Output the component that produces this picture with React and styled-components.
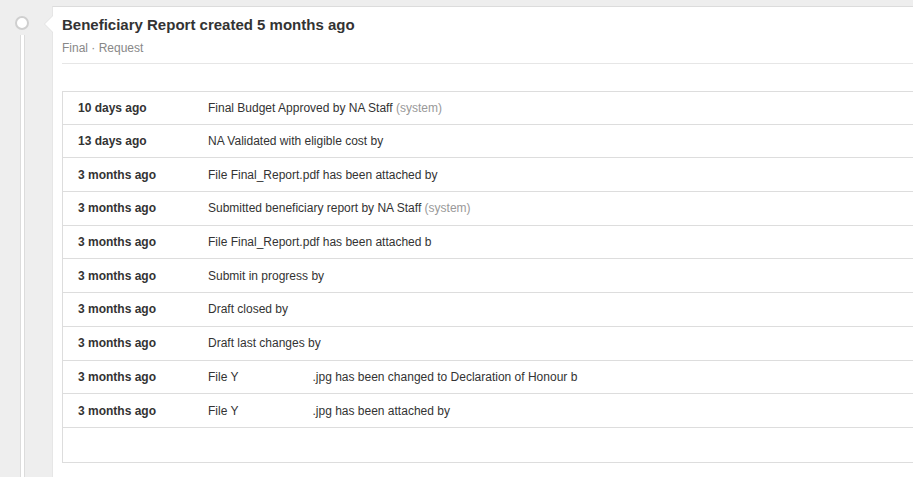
import React from "react";
import styled, { createGlobalStyle } from "styled-components";

const Global = createGlobalStyle`
  html, body {
    margin: 0;
    padding: 0;
    background: #eeeeee;
    overflow: hidden;
  }
  body {
    font-family: "Liberation Sans", Arial, sans-serif;
    color: #333;
  }
`;

const Page = styled.div`
  display: flex;
  align-items: stretch;
  padding-top: 6px;
  height: 471px;
  width: 100%;
`;

const Rail = styled.div`
  flex: 0 0 44px;
  display: flex;
  flex-direction: column;
  align-items: center;
  padding-top: 10px;
`;

const Dot = styled.div`
  width: 10px;
  height: 10px;
  border-radius: 50%;
  background: #fff;
  border: 2px solid #cfcfcf;
`;

const Line = styled.div`
  flex: 1;
  width: 3px;
  margin-top: 5px;
  background: #fff;
  border-left: 1px solid #dcdcdc;
  border-right: 1px solid #dcdcdc;
`;

const Card = styled.div`
  position: relative;
  margin-left: 8px;
  flex: 1;
  min-width: 0;
  background: #fff;
  border-top: 1px solid #dcdcdc;
  border-left: 1px solid #e6e6e6;
  padding: 8px 0 0 9px;
  box-sizing: border-box;

  &::before {
    content: "";
    position: absolute;
    left: -9px;
    top: 8px;
    border-top: 9px solid transparent;
    border-bottom: 9px solid transparent;
    border-right: 9px solid #e2e2e2;
  }
  &::after {
    content: "";
    position: absolute;
    left: -8px;
    top: 9px;
    border-top: 8px solid transparent;
    border-bottom: 8px solid transparent;
    border-right: 8px solid #fff;
  }
`;

const Header = styled.div`
  border-bottom: 1px solid #e6e6e6;
  padding-bottom: 8px;
`;

const Title = styled.h2`
  margin: 0;
  font-size: 15px;
  line-height: 20px;
  font-weight: bold;
  color: #333;
`;

const Meta = styled.div`
  margin-top: 6px;
  font-size: 12px;
  line-height: 14px;
  color: #888;
`;

const Table = styled.div`
  margin-top: 27px;
  border: 1px solid #dddddd;
  border-right: none;
`;

const Row = styled.div`
  display: grid;
  grid-template-columns: 145px 1fr;
  align-items: center;
  height: 33.7px;
  box-sizing: border-box;
  border-bottom: 1px solid #dddddd;
  font-size: 12px;
  &:first-child {
    height: 32.7px;
  }
  &:last-child {
    border-bottom: none;
  }
`;

const When = styled.div`
  padding-left: 15px;
  font-weight: bold;
  color: #333;
`;

const What = styled.div`
  color: #333;
  white-space: nowrap;
  overflow: hidden;
`;

const Muted = styled.span`
  color: #999;
`;

const Hidden = styled.span`
  display: inline-block;
  width: ${(p) => p.$w}px;
`;

const rows = [
  ["10 days ago", <>Final Budget Approved by NA Staff <Muted>(system)</Muted></>],
  ["13 days ago", <>NA Validated with eligible cost by</>],
  ["3 months ago", <>File Final_Report.pdf has been attached by</>],
  ["3 months ago", <>Submitted beneficiary report by NA Staff <Muted>(system)</Muted></>],
  ["3 months ago", <>File Final_Report.pdf has been attached b</>],
  ["3 months ago", <>Submit in progress by</>],
  ["3 months ago", <>Draft closed by</>],
  ["3 months ago", <>Draft last changes by</>],
  ["3 months ago", <>File Y<Hidden $w={74} />.jpg has been changed to Declaration of Honour b</>],
  ["3 months ago", <>File Y<Hidden $w={74} />.jpg has been attached by</>],
];

export default function App() {
  return (
    <>
      <Global />
      <Page>
        <Rail>
          <Dot />
          <Line />
        </Rail>
        <Card>
          <Header>
            <Title>Beneficiary Report created 5 months ago</Title>
            <Meta>Final · Request</Meta>
          </Header>
          <Table>
            {rows.map(([w, m], i) => (
              <Row key={i}>
                <When>{w}</When>
                <What>{m}</What>
              </Row>
            ))}
            <Row>
              <When />
              <What />
            </Row>
          </Table>
        </Card>
      </Page>
    </>
  );
}
